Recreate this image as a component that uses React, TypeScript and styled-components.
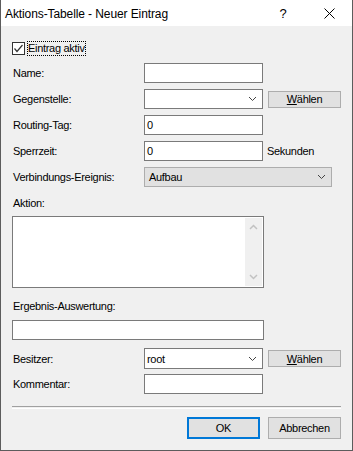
import React from 'react';
import styled, {createGlobalStyle} from 'styled-components';

const GlobalStyle = createGlobalStyle`
  html, body {
    margin: 0;
    padding: 0;
    background: #ffffff;
  }
  body {
    font-family: 'Liberation Sans', Arial, sans-serif;
    font-size: 11px;
    letter-spacing: -0.3px;
    color: #000000;
  }
`;

const Window = styled.div`
  width: 353px;
  height: 451px;
  box-sizing: border-box;
  border: 1px solid #5c5c5c;
  border-top: none;
  background: #f0f0f0;
  display: flex;
  flex-direction: column;
`;

const TitleBar = styled.div`
  height: 26px;
  background: #ffffff;
  display: flex;
  align-items: center;
  flex-shrink: 0;
`;

const TitleText = styled.div`
  flex: 1;
  padding-left: 4px;
  font-size: 12px;
  letter-spacing: -0.1px;
  padding-top: 2px;
`;

const CaptionButton = styled.div`
  width: 46px;
  height: 26px;
  display: flex;
  align-items: center;
  justify-content: center;
  font-size: 13px;
`;

const Content = styled.div`
  padding: 14px 11px 0 11px;
  display: flex;
  flex-direction: column;
`;

const CheckRow = styled.div`
  display: flex;
  align-items: center;
  height: 16px;
`;

const CheckBox = styled.div`
  width: 13px;
  height: 13px;
  box-sizing: border-box;
  border: 1px solid #333333;
  background: #ffffff;
  display: flex;
  align-items: center;
  justify-content: center;
`;

const CheckLabel = styled.span`
  margin-left: 2px;
  padding: 1px 1px 2px 1px;
  outline: 1px dotted #000000;
  outline-offset: -1px;
  line-height: 12px;
`;

const FormRow = styled.div<{$top: number; $height?: number}>`
  display: flex;
  align-items: center;
  height: ${(p) => p.$height ?? 20}px;
  margin-top: ${(p) => p.$top}px;
`;

const FieldLabel = styled.div`
  width: 132px;
  padding-left: 1px;
  box-sizing: border-box;
  flex-shrink: 0;
`;

const TextField = styled.div<{$width?: number; $height?: number}>`
  width: ${(p) => p.$width ?? 119}px;
  height: ${(p) => p.$height ?? 20}px;
  box-sizing: border-box;
  border: 1px solid #7a7a7a;
  background: #ffffff;
  padding-left: 2px;
  display: flex;
  align-items: center;
  flex-shrink: 0;
`;

const ComboValue = styled.span`
  flex: 1;
`;

const Chevron = styled.svg`
  width: 9px;
  height: 6px;
  margin-right: 5px;
`;

const SelectBox = styled.div`
  width: 188px;
  height: 20px;
  box-sizing: border-box;
  border: 1px solid #adadad;
  background: #e1e1e1;
  padding-left: 4px;
  display: flex;
  align-items: center;
`;

const PushButton = styled.div<{$height?: number; $default?: boolean}>`
  width: 73px;
  height: ${(p) => p.$height ?? 17}px;
  box-sizing: border-box;
  border: ${(p) => (p.$default ? '2px solid #0078d7' : '1px solid #adadad')};
  background: #e1e1e1;
  display: flex;
  align-items: center;
  justify-content: center;
  flex-shrink: 0;
`;

const Gap = styled.div<{$w: number}>`
  width: ${(p) => p.$w}px;
  flex-shrink: 0;
`;

const UnitLabel = styled.span`
  margin-left: 4px;
`;

const SectionLabel = styled.div<{$top: number}>`
  margin-top: ${(p) => p.$top}px;
  padding-left: 1px;
  height: 13px;
  line-height: 13px;
`;

const TextArea = styled.div`
  margin-top: 6px;
  width: 252px;
  height: 72px;
  box-sizing: border-box;
  border: 1px solid #7a7a7a;
  background: #ffffff;
  display: flex;
  justify-content: flex-end;
  padding: 1px;
`;

const ScrollBar = styled.div`
  width: 17px;
  background: #f0f0f0;
  display: flex;
  flex-direction: column;
  justify-content: space-between;
  align-items: center;
  padding: 6px 0;
`;

const WideField = styled(TextField)`
  margin-top: 7px;
`;

const Separator = styled.div`
  margin-top: 12px;
  height: 1px;
  border-top: 1px solid #a0a0a0;
  border-bottom: 1px solid #ffffff;
`;

const Footer = styled.div`
  margin-top: 8px;
  display: flex;
  justify-content: flex-end;
  gap: 8px;
`;

const ChevronDown = () => (
  <Chevron viewBox="0 0 9 6">
    <polyline points="1,1 4.5,4.5 8,1" fill="none" stroke="#444" strokeWidth="1" />
  </Chevron>
);

const Arrow = ({up}: {up?: boolean}) => (
  <svg width="9" height="6" viewBox="0 0 9 6">
    <polyline
      points={up ? '1,5 4.5,1.5 8,5' : '1,1 4.5,4.5 8,1'}
      fill="none"
      stroke="#c2c2c2"
      strokeWidth="1.5"
    />
  </svg>
);

const App = () => {
  return (
    <>
      <GlobalStyle />
      <Window>
        <TitleBar>
          <TitleText>Aktions-Tabelle - Neuer Eintrag</TitleText>
          <CaptionButton>?</CaptionButton>
          <CaptionButton>
            <svg width="11" height="11" viewBox="0 0 11 11">
              <path d="M0.5 0.5 L10.5 10.5 M10.5 0.5 L0.5 10.5" stroke="#000" strokeWidth="1" />
            </svg>
          </CaptionButton>
        </TitleBar>
        <Content>
          <CheckRow>
            <CheckBox>
              <svg width="11" height="11" viewBox="0 0 11 11">
                <polyline points="1.5,5.5 4,8.5 9.5,2" fill="none" stroke="#333" strokeWidth="1.2" />
              </svg>
            </CheckBox>
            <CheckLabel>Eintrag aktiv</CheckLabel>
          </CheckRow>

          <FormRow $top={7}>
            <FieldLabel>Name:</FieldLabel>
            <TextField />
          </FormRow>
          <FormRow $top={6}>
            <FieldLabel>Gegenstelle:</FieldLabel>
            <TextField>
              <ComboValue />
              <ChevronDown />
            </TextField>
            <Gap $w={5} />
            <PushButton>
              <span>
                <u>W</u>ählen
              </span>
            </PushButton>
          </FormRow>
          <FormRow $top={6}>
            <FieldLabel>Routing-Tag:</FieldLabel>
            <TextField>0</TextField>
          </FormRow>
          <FormRow $top={6}>
            <FieldLabel>Sperrzeit:</FieldLabel>
            <TextField>0</TextField>
            <UnitLabel>Sekunden</UnitLabel>
          </FormRow>
          <FormRow $top={6}>
            <FieldLabel>Verbindungs-Ereignis:</FieldLabel>
            <SelectBox>
              <ComboValue>Aufbau</ComboValue>
              <ChevronDown />
            </SelectBox>
          </FormRow>

          <SectionLabel $top={10}>Aktion:</SectionLabel>
          <TextArea>
            <ScrollBar>
              <Arrow up />
              <Arrow />
            </ScrollBar>
          </TextArea>

          <SectionLabel $top={12}>Ergebnis-Auswertung:</SectionLabel>
          <WideField $width={252} />

          <FormRow $top={8} $height={21}>
            <FieldLabel>Besitzer:</FieldLabel>
            <TextField $height={21}>
              <ComboValue>root</ComboValue>
              <ChevronDown />
            </TextField>
            <Gap $w={5} />
            <PushButton>
              <span>
                <u>W</u>ählen
              </span>
            </PushButton>
          </FormRow>
          <FormRow $top={5}>
            <FieldLabel>Kommentar:</FieldLabel>
            <TextField />
          </FormRow>

          <Separator />
          <Footer>
            <PushButton $height={22} $default>
              OK
            </PushButton>
            <PushButton $height={22}>Abbrechen</PushButton>
          </Footer>
        </Content>
      </Window>
    </>
  );
};

export default App;
